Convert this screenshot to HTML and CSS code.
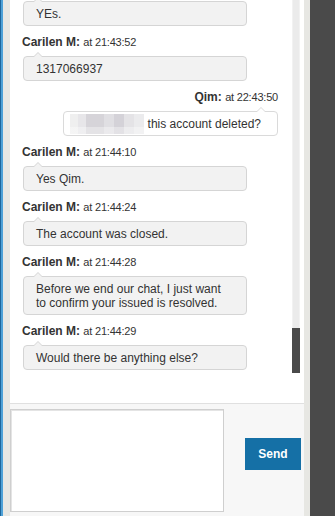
FILE: index.html
```html
<!DOCTYPE html>
<html lang="en">
<head>
  <meta charset="UTF-8">
  <meta name="viewport" content="width=device-width, initial-scale=1.0">
  <title>Chat</title>
  <link rel="stylesheet" href="styles.css">
</head>
<body>
  <div class="frame">
    <div class="edge"></div>
    <div class="panel">
      <div class="chat">
        <div class="messages">
          <div class="bubble">YEs.</div>

          <div class="label"><b>Carilen M:</b> <span class="time">at 21:43:52</span></div>
          <div class="bubble">1317066937</div>

          <div class="label mine"><b>Qim:</b> <span class="time">at 22:43:50</span></div>
          <div class="bubble mine"><span class="blur"></span> this account deleted?</div>

          <div class="label"><b>Carilen M:</b> <span class="time">at 21:44:10</span></div>
          <div class="bubble">Yes Qim.</div>

          <div class="label"><b>Carilen M:</b> <span class="time">at 21:44:24</span></div>
          <div class="bubble">The account was closed.</div>

          <div class="label"><b>Carilen M:</b> <span class="time">at 21:44:28</span></div>
          <div class="bubble">Before we end our chat, I just want to confirm your issued is resolved.</div>

          <div class="label"><b>Carilen M:</b> <span class="time">at 21:44:29</span></div>
          <div class="bubble">Would there be anything else?</div>
        </div>
        <div class="scrollbar">
          <div class="track"></div>
          <div class="thumb"></div>
        </div>
      </div>
      <div class="composer">
        <textarea class="input"></textarea>
        <button class="send">Send</button>
      </div>
    </div>
    <div class="gutter"></div>
    <div class="dark"></div>
  </div>
</body>
</html>
```

FILE: styles.css
```css
body {
  margin: 0;
  padding: 0;
  font-family: "Liberation Sans", Arial, sans-serif;
  color: #333;
}

.frame {
  display: flex;
  width: 335px;
  height: 516px;
  overflow: hidden;
}

.edge {
  width: 10px;
  flex-shrink: 0;
  background: linear-gradient(to right, #1f679c 0 1px, #4fa2d8 1px 3px, #e8e8e4 3px);
}

.panel {
  width: 294px;
  flex-shrink: 0;
  display: flex;
  flex-direction: column;
}

.chat {
  height: 403px;
  display: flex;
  background: #fff;
  border-bottom: 1px solid #e0e0e0;
}

.messages {
  width: 282px;
  overflow: hidden;
  display: flex;
  flex-direction: column;
  justify-content: flex-end;
  padding-bottom: 33px;
}

.label {
  flex-shrink: 0;
  margin: 8px 14px 6px 12px;
  font-size: 12px;
  line-height: 16px;
}

.label.mine {
  text-align: right;
}

.time {
  font-size: 11px;
  letter-spacing: -0.2px;
}

.bubble {
  flex-shrink: 0;
  position: relative;
  box-sizing: border-box;
  width: 224px;
  margin-left: 13px;
  padding: 5px 12px 4px;
  background: #f2f2f2;
  border: 1px solid #d5d5d5;
  border-radius: 4px;
  font-size: 12px;
  line-height: 14px;
}

.bubble::before,
.bubble::after {
  content: "";
  position: absolute;
  left: 10px;
  border-left: 4px solid transparent;
  border-right: 4px solid transparent;
}

.bubble::before {
  top: -5px;
  border-bottom: 4px solid #d5d5d5;
}

.bubble::after {
  top: -4px;
  border-bottom: 4px solid #f2f2f2;
}

.bubble.mine {
  width: auto;
  align-self: flex-end;
  margin-left: 0;
  margin-right: 14px;
  padding: 5px 16px 4px 6px;
  background: #fff;
  border-color: #dadada;
}

.bubble.mine::before,
.bubble.mine::after {
  left: auto;
  right: 12px;
}

.bubble.mine::before {
  border-bottom-color: #dadada;
}

.bubble.mine::after {
  border-bottom-color: #fff;
}

.blur {
  display: inline-block;
  width: 74px;
  height: 20px;
  margin: -3px 0;
  vertical-align: top;
  background:
    linear-gradient(to bottom, transparent 0 13px, rgba(255, 255, 255, 0.35) 13px),
    linear-gradient(to right, #efefef 0 8px, #e7e6e9 8px 16px, #d6d4d9 16px 34px, #e0dfe3 34px 44px, #d4d2d8 44px 54px, #e4e3e6 54px 64px, #ebebed 64px);
}

.scrollbar {
  width: 8px;
  height: 373px;
  margin-right: 4px;
  display: flex;
  flex-direction: column;
}

.track {
  flex: 1;
  background: #ebebeb;
  border-left: 1px solid #f2f2f2;
  border-right: 1px solid #f2f2f2;
}

.thumb {
  height: 45px;
  background: #4a4a4a;
}

.composer {
  flex: 1;
  display: flex;
  align-items: flex-start;
  background: #f7f7f7;
}

.input {
  box-sizing: border-box;
  width: 214px;
  height: 103px;
  margin: 5px 0 0 0;
  border: 1px solid #cfcfcf;
  box-shadow: inset 1px 1px 0 #e4e4e4;
  background: #fff;
  resize: none;
}

.send {
  width: 56px;
  height: 32px;
  margin: 34px 0 0 21px;
  background: #1570a6;
  color: #fff;
  border: none;
  font-family: "Liberation Sans", Arial, sans-serif;
  font-weight: bold;
  font-size: 12px;
  cursor: pointer;
}

.gutter {
  width: 6px;
  flex-shrink: 0;
  background: #e7e7e3;
}

.dark {
  flex: 1;
  background: #4a4a4a;
}
```
